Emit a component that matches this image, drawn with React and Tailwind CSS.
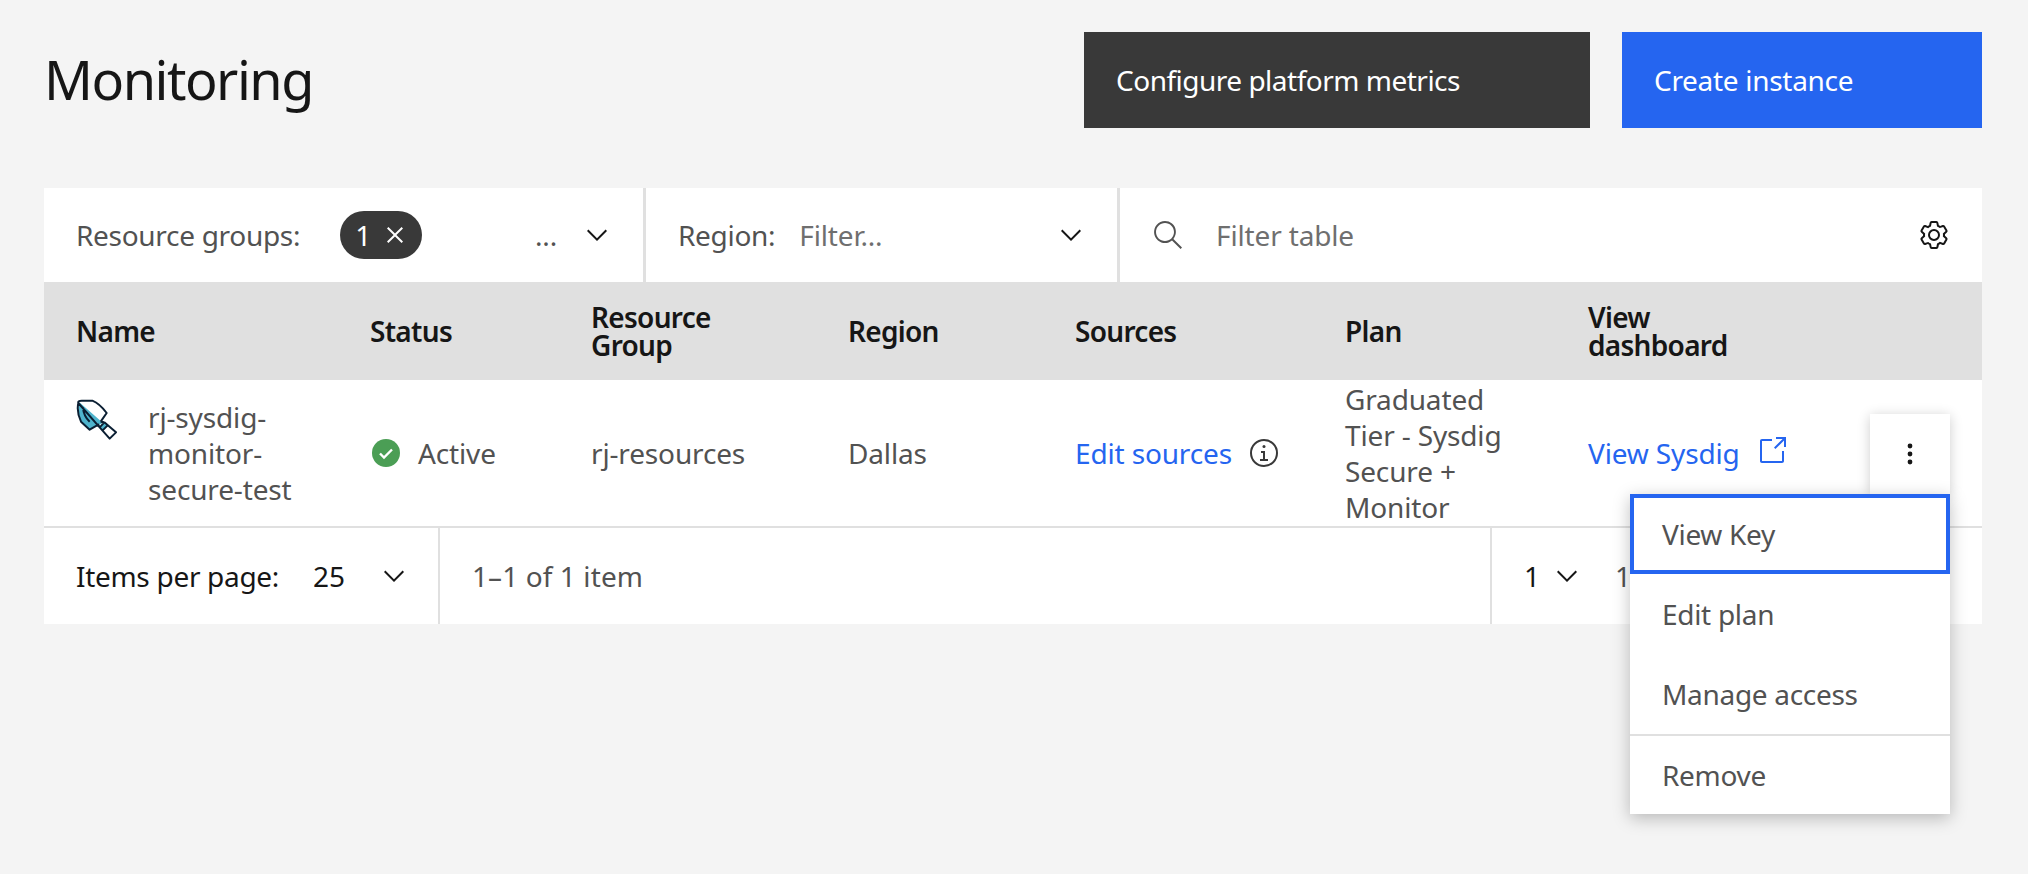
import React from 'react'

const columns = 'grid grid-cols-[294px_221px_257px_227px_270px_243px_1fr]'

function ChevronDown({ className = '' }) {
  return (
    <svg className={`h-8 w-8 shrink-0 ${className}`} viewBox="0 0 16 16" fill="currentColor">
      <path d="M8 11L3 6 3.7 5.3 8 9.6 12.3 5.3 13 6z" />
    </svg>
  )
}

function ShovelIcon() {
  return (
    <svg className="h-[41px] w-[42px] shrink-0" viewBox="45 28 126 123">
      <path d="M52 40 Q50 33 62 33 L94 33 Q116 42 137 70 L119 96 L112 117 L86 120 L60 96 Q46 66 52 40z" fill="#fff" />
      <path d="M55 38 L126 100 L112 105 L86 120 L60 96 Q48 66 55 38z" fill="#4fb4cd" />
      <path d="M116 113 L130 98 L165 128 L146 147z" fill="#fff" />
      <path d="M116 113 L130 98 L140 107 L125 122z" fill="#4fb4cd" />
      <path
        d="M52 40 Q50 33 62 33 L94 33 Q116 42 137 70 L119 96 M130 98 L165 128 L146 147 L116 113 L130 98 M140 107 L125 122 M119 96 L130 98 M116 113 L112 105 L86 120 L60 96 Q46 66 52 40z M66 54 Q68 80 86 96"
        fill="none"
        stroke="#0b1f33"
        strokeWidth="6"
        strokeLinejoin="round"
      />
    </svg>
  )
}

function StatusIcon() {
  return (
    <svg className="h-7 w-7 shrink-0" viewBox="0 0 28 28">
      <circle cx="14" cy="14" r="14" fill="#4b9e55" />
      <path d="M8 14.5l4 4 8-8" fill="none" stroke="#fff" strokeWidth="2.4" />
    </svg>
  )
}

function MenuItem({ label, focused, last }) {
  return (
    <div
      className={`flex items-center text-[#525252] ${last ? 'h-[78px]' : 'h-20'} ${
        focused ? 'border-4 border-[#2565f0] pl-7' : 'pl-8'
      }`}
    >
      {label}
    </div>
  )
}

export default function App() {
  return (
    <div className="min-h-screen bg-[#f4f4f4] pl-11 pr-[46px] pt-8 font-['Noto_Sans',sans-serif] text-[28px] leading-9 tracking-[-0.15px] text-[#161616]">
      {/* Page header */}
      <div className="mb-[60px] flex h-24 items-center">
        <h1 className="-mt-0.5 flex-1 text-[54px] leading-[72px] font-normal tracking-[-1.5px]">Monitoring</h1>
        <button className="flex h-24 w-[506px] items-center bg-[#393939] pl-8 text-left tracking-[-0.5px] text-white">
          Configure platform metrics
        </button>
        <button className="ml-8 flex h-24 w-[360px] items-center bg-[#2565f0] pl-8 text-left tracking-[-0.3px] text-white">
          Create instance
        </button>
      </div>

      {/* Filter toolbar */}
      <div className="flex h-[94px] bg-white">
        <div className="flex w-[602px] items-center border-r-[3px] border-[#e0e0e0] pl-8 pr-[30px]">
          <span className="tracking-[-0.3px] text-[#525252]">Resource groups:</span>
          <span className="ml-10 flex h-12 w-[82px] items-center justify-center gap-2 rounded-3xl bg-[#393939] pl-1 text-white">
            1
            <svg className="h-8 w-8" viewBox="0 0 32 32" fill="currentColor">
              <path d="M24 9.4L22.6 8 16 14.6 9.4 8 8 9.4 14.6 16 8 22.6 9.4 24 16 17.4 22.6 24 24 22.6 17.4 16 24 9.4z" />
            </svg>
          </span>
          <span className="ml-auto text-[#525252]">...</span>
          <ChevronDown className="ml-6" />
        </div>
        <div className="flex w-[474px] items-center border-r-[3px] border-[#e0e0e0] pl-8 pr-[30px]">
          <span className="tracking-[-0.3px] text-[#525252]">Region:</span>
          <span className="ml-6 text-[#6f6f6f]">Filter...</span>
          <ChevronDown className="ml-auto" />
        </div>
        <div className="flex flex-1 items-center pl-8 pr-8">
          <svg className="h-8 w-8 text-[#525252]" viewBox="0 0 16 16" fill="currentColor">
            <path d="M15,14.3L10.7,10c1.9-2.3,1.6-5.8-0.7-7.7S4.2,0.7,2.3,3S0.7,8.8,3,10.7c2,1.7,5,1.7,7,0l4.3,4.3L15,14.3z M2,6.5 C2,4,4,2,6.5,2S11,4,11,6.5S9,11,6.5,11S2,9,2,6.5z" />
          </svg>
          <span className="ml-8 text-[#6f6f6f]">Filter table</span>
          <svg className="ml-auto h-8 w-8" viewBox="0 0 32 32" fill="currentColor">
            <path d="M27,16.76c0-.25,0-.5,0-.76s0-.51,0-.77l1.92-1.68A2,2,0,0,0,29.3,11L26.94,7a2,2,0,0,0-1.73-1,2,2,0,0,0-.64.1l-2.43.82a11.35,11.35,0,0,0-1.31-.75l-.51-2.52a2,2,0,0,0-2-1.61H13.64a2,2,0,0,0-2,1.61l-.51,2.52a11.48,11.48,0,0,0-1.32.75L7.43,6.06A2,2,0,0,0,6.79,6,2,2,0,0,0,5.06,7L2.7,11a2,2,0,0,0,.41,2.51L5,15.24c0,.25,0,.5,0,.76s0,.51,0,.77L3.11,18.45A2,2,0,0,0,2.7,21L5.06,25a2,2,0,0,0,1.73,1,2,2,0,0,0,.64-.1l2.43-.82a11.35,11.35,0,0,0,1.31.75l.51,2.52a2,2,0,0,0,2,1.61h4.72a2,2,0,0,0,2-1.61l.51-2.52a11.48,11.48,0,0,0,1.32-.75l2.42.82a2,2,0,0,0,.64.1,2,2,0,0,0,1.73-1L29.3,21a2,2,0,0,0-.41-2.51ZM25.21,24l-3.43-1.16a8.86,8.86,0,0,1-2.71,1.57L18.36,28H13.64l-.71-3.55a9.36,9.36,0,0,1-2.7-1.57L6.79,24,4.43,20l2.72-2.4a8.9,8.9,0,0,1,0-3.13L4.43,12,6.79,8l3.43,1.16a8.86,8.86,0,0,1,2.71-1.57L13.64,4h4.72l.71,3.55a9.36,9.36,0,0,1,2.7,1.57L25.21,8,27.57,12l-2.72,2.4a8.9,8.9,0,0,1,0,3.13L27.57,20Z" />
            <path d="M16,22a6,6,0,1,1,6-6A5.94,5.94,0,0,1,16,22Zm0-10a3.91,3.91,0,0,0-4,4,3.91,3.91,0,0,0,4,4,3.91,3.91,0,0,0,4-4A3.91,3.91,0,0,0,16,12Z" />
          </svg>
        </div>
      </div>

      {/* Table header */}
      <div className={`${columns} h-[98px] items-center bg-[#e0e0e0] pl-8 leading-7 font-semibold tracking-[-0.7px]`}>
        <div>Name</div>
        <div>Status</div>
        <div className="w-[160px]">Resource Group</div>
        <div>Region</div>
        <div>Sources</div>
        <div>Plan</div>
        <div className="w-[160px]">View dashboard</div>
      </div>

      {/* Table row */}
      <div className={`${columns} relative h-[148px] items-center border-b-2 border-[#e0e0e0] bg-white pl-8 text-[#525252]`}>
        <div className="flex items-start gap-[30px]">
          <ShovelIcon />
          <div className="w-[150px]">rj-sysdig-monitor-secure-test</div>
        </div>
        <div className="flex items-center gap-[18px] pl-0.5">
          <StatusIcon />
          Active
        </div>
        <div>rj-resources</div>
        <div>Dallas</div>
        <div className="flex items-center gap-4">
          <span className="text-[#2565f0]">Edit sources</span>
          <svg className="h-8 w-8 shrink-0 text-[#393939]" viewBox="0 0 32 32" fill="currentColor">
            <path d="M17 22L17 14 13 14 13 16 15 16 15 22 12 22 12 24 20 24 20 22 17 22z" />
            <path d="M16,8a1.5,1.5,0,1,0,1.5,1.5A1.5,1.5,0,0,0,16,8Z" />
            <path d="M16,30A14,14,0,1,1,30,16,14,14,0,0,1,16,30ZM16,4A12,12,0,1,0,28,16,12,12,0,0,0,16,4Z" />
          </svg>
        </div>
        <div className="w-[170px]">Graduated Tier - Sysdig Secure + Monitor</div>
        <div className="flex items-center gap-4 text-[#2565f0]">
          View Sysdig
          <svg className="-mt-1 h-8 w-8 shrink-0" viewBox="0 0 16 16" fill="currentColor">
            <path d="M13,14H3c-0.6,0-1-0.4-1-1V3c0-0.6,0.4-1,1-1h5v1H3v10h10V8h1v5C14,13.6,13.6,14,13,14z" />
            <path d="M10 1L10 2 13.3 2 9 6.3 9.7 7 14 2.7 14 6 15 6 15 1z" />
          </svg>
        </div>

        {/* Overflow menu, open */}
        <div className="absolute left-[1826px] top-[34px] z-10 flex h-20 w-20 items-center justify-center bg-white shadow-[0_2px_12px_rgba(0,0,0,0.2)]">
          <svg className="h-8 w-8 text-[#161616]" viewBox="0 0 32 32" fill="currentColor">
            <circle cx="16" cy="8" r="2.4" />
            <circle cx="16" cy="16" r="2.4" />
            <circle cx="16" cy="24" r="2.4" />
          </svg>
        </div>
        <div className="absolute left-[1586px] top-[114px] z-20 w-[320px] bg-white tracking-[-0.3px] shadow-[0_4px_16px_rgba(0,0,0,0.25)]">
          <MenuItem label="View Key" focused />
          <MenuItem label="Edit plan" />
          <MenuItem label="Manage access" />
          <div className="h-0.5 bg-[#e0e0e0]" />
          <MenuItem label="Remove" last />
        </div>
      </div>

      {/* Pagination */}
      <div className="flex h-24 bg-white">
        <div className="flex w-[396px] items-center border-r-2 border-[#e0e0e0] pl-8">
          <span className="tracking-[-0.3px]">Items per page:</span>
          <span className="ml-[34px]">25</span>
          <ChevronDown className="ml-[33px]" />
        </div>
        <div className="flex flex-1 items-center border-r-2 border-[#e0e0e0] pl-8 tracking-[0.1px] text-[#525252]">1–1 of 1 item</div>
        <div className="flex w-[490px] items-center pl-8">
          1
          <ChevronDown className="ml-[11px]" />
          <span className="ml-8 text-[#525252]">1</span>
        </div>
      </div>
    </div>
  )
}
